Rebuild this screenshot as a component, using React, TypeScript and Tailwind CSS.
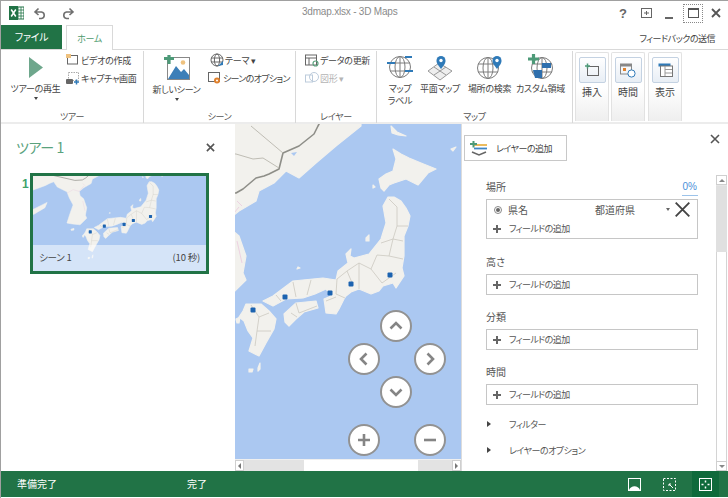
import React from "react";

const LAND = "#f2f1ed";
const SEA = "#abc8f1";
const BORDER = "#cbc9c0";

function Geography({ m = 5 }: { m?: number }) {
  return (
    <g stroke={LAND} strokeWidth="1.2" strokeLinejoin="round">
      <path fill={LAND} d="M60 110 L360 110 L360 125 L335 145 L315 162 L298 177 L285 170 L273 182 L258 190 L255 200 L238 210 L228 218 L230 228 L238 235 L245 255 L242 272 L245 279 L230 294 L212 292 L200 290 L207 268 L214 249 L205 232 L200 219 L178 208 L170 196 L160 200 L150 205 L123 215 L60 215 Z" />
      <path fill={LAND} d="M100 262 L125 258 L155 243 L150 255 L125 270 L100 275Z" />
      <path fill={SEA} stroke="none" d="M290 152 L296 151 L293 155Z" />
      <path fill={LAND} d="M209 304 L216 302 L216 306 L210 307Z" />
      <path fill="none" stroke="#e9c4dc" strokeWidth="0.7" d="M200 222 L214 214 L228 218 L238 206 M236 200 L241 205 M236 240 L241 262" />
      <path fill="none" stroke="#8e8e88" strokeWidth="1.6" d="M60 150 L120 175 L170 182 L205 190 L218 193 L235 192 L242 188 L255 177 L263 175 L268 173 L278 168 L282 152 L298 145 L313 133 L317 125 L325 110" />
      <path fill="none" stroke="#b9b7ae" strokeWidth="0.9" d="M235 153 L252 158 L262 157 L278 167 M100 135 L190 150 L235 153 M250 125 L282 152" />
      {/* Hokkaido */}
      <path fill={LAND} d="M392 148 L400 153 L408 157 L420 162 L435 168 L427 172 L417 184 L405 178 L393 182 L388 184 L383 190 L380 187 L378 178 L385 173 L392 170 L395 158 Z" />
      <path fill={LAND} d="M390 125 L396 131 L405 135 L397 134 L391 132 Z M450 148 L455 146 L452 150Z M372 184 L374 186 L372 187Z" />
      {/* Honshu */}
      <path fill={LAND} d="M387 196 L393 196 L400 200 L405 207 L409 215 L407 225 L403 235 L403 255 L401 267 L403 275 L395 287 L392 282 L382 285 L378 290 L370 293 L358 288 L350 291 L345 295 L343 298 L338 308 L335 313 L325 312 L323 298 L330 295 L325 288 L314 293 L302 297 L285 298 L272 305 L262 300 L272 295 L292 280 L312 278 L322 277 L335 279 L337 270 L347 262 L345 253 L350 248 L349 255 L353 257 L368 253 L380 238 L385 222 L382 205 Z" />
      {/* Shikoku */}
      <path fill={LAND} d="M283 313 L295 302 L315 300 L317 307 L303 311 L295 318 L288 325 L284 321 Z" />
      {/* Kyushu */}
      <path fill={LAND} d="M245 303 L260 303 L268 310 L275 318 L273 328 L265 342 L258 355 L248 350 L252 337 L247 330 L243 320 L238 316 L242 310Z" />
      <path fill={LAND} d="M248 368 L252 368 L251 371 L248 371Z M257 367 L259 362 L259 368 L257 370 Z M235 318 L239 316 L238 322 L236 322Z M365 237 L368 234 L368 240 L365 240Z M297 266 L299 267 L296 268Z" />
      <path fill="none" stroke={BORDER} strokeWidth="0.8" d="M388 198 L396 206 L396 225 L392 238 L380 242 M396 225 L407 225 M392 238 L402 240 M392 238 L388 255 L402 258 M388 255 L376 254 L370 268 L381 282 L395 272 M370 268 L358 262 L346 270 L352 284 M358 262 L358 288 M346 270 L336 278 L335 293 M335 293 L344 297 M310 279 L306 294 M292 281 L295 296 M275 294 L280 300 M335 296 L325 300 M295 302 L298 312 L316 305 M290 312 L296 316 M250 304 L258 316 L268 312 M258 316 L256 330 L270 330 M256 330 L254 345" />
      <g fill="#1c63b0" stroke="none">
        <rect x={249.5} y={306.5} width={m} height={m} rx={1} />
        <rect x={281.5} y={293.5} width={m} height={m} rx={1} />
        <rect x={326.5} y={289.5} width={m} height={m} rx={1} />
        <rect x={347.5} y={280.5} width={m} height={m} rx={1} />
        <rect x={386.5} y={271.5} width={m} height={m} rx={1} />
      </g>
    </g>
  );
}

function Small({ icon, label, muted, tight }: { icon: React.ReactNode; label: string; muted?: boolean; tight?: boolean }) {
  return (
    <div className={`flex items-center gap-[1px] h-[18px] whitespace-nowrap text-[9px] ${tight ? "tracking-[-0.7px]" : "tracking-[-0.3px]"} ${muted ? "text-[#b4b4b4]" : "text-[#444]"}`}>
      <span className="w-[15px] h-[15px] flex items-center justify-center shrink-0">{icon}</span>
      <span>{label}</span>
    </div>
  );
}

function Big({ icon, label, w, caret }: { icon: React.ReactNode; label: React.ReactNode; w: string; caret?: boolean }) {
  return (
    <div className={`${w} flex flex-col items-center shrink-0`}>
      <div className="h-[30px] flex items-center justify-center">{icon}</div>
      <div className="mt-[1px] text-[9px] tracking-[-0.3px] leading-[12px] text-center text-[#444] whitespace-nowrap">{label}</div>
      {caret && <div className="mt-[2px] w-0 h-0 border-x-[2.5px] border-x-transparent border-t-[3px] border-t-[#444]" />}
    </div>
  );
}

function Group({ w, title, children }: { w: string; title: string; children: React.ReactNode }) {
  return (
    <div className={`${w} shrink-0 h-[72px] mt-[1px] flex flex-col border-r border-[#d8d8d8]`}>
      <div className="flex-1 min-h-0 flex pt-[1px]">{children}</div>
      <div className="h-[13px] leading-[13px] text-center text-[9px] tracking-[-0.3px] text-[#555]">{title}</div>
    </div>
  );
}

function Card({ icon, label }: { icon: React.ReactNode; label: string }) {
  return (
    <div className="w-[34px] h-[69px] shrink-0 rounded-t-[2px] border border-[#e2e2e2] border-b-0 bg-gradient-to-b from-white via-white to-[#eeeeee] flex flex-col items-center pt-[4px]">
      <div className="w-[27px] h-[26px] border border-[#c4d2e2] rounded-[2px] bg-gradient-to-b from-white to-[#e8eef5] flex items-center justify-center">{icon}</div>
      <div className="mt-[4px] text-[10px] text-[#444]">{label}</div>
    </div>
  );
}

function Globe({ size = 24 }: { size?: number }) {
  return (
    <svg width={size} height={size} viewBox="0 0 24 24" fill="none" stroke="#7d7d7d" strokeWidth="1">
      <circle cx="12" cy="12" r="10.5" />
      <ellipse cx="12" cy="12" rx="5" ry="10.5" />
      <path d="M2 8h20M2 16h20M12 1.5v21" />
    </svg>
  );
}

function Pin({ x, y }: { x: number; y: number }) {
  return (
    <g transform={`translate(${x} ${y})`}>
      <path d="M0 10 C-4 5 -4.5 3.5 -4.5 1.5 A4.5 4.5 0 0 1 4.5 1.5 C4.5 3.5 4 5 0 10Z" fill="#2f7ab8" />
      <circle cx="0" cy="1.5" r="1.7" fill="#fff" />
    </g>
  );
}

function FieldBox({ children }: { children?: React.ReactNode }) {
  return <div className="w-[212px] border border-[#c6c6c6] bg-white">{children}</div>;
}

function AddField() {
  return (
    <div className="h-[19px] flex items-center pl-[6px] text-[9px] tracking-[-0.6px] text-[#555] whitespace-nowrap">
      <span className="w-[8px] h-[8px] relative mr-[8px] shrink-0">
        <span className="absolute left-0 right-0 top-[3px] h-[2px] bg-[#666]" />
        <span className="absolute top-0 bottom-0 left-[3px] w-[2px] bg-[#666]" />
      </span>
      フィールドの追加
    </div>
  );
}

function Section({ label, h, children, right }: { label: string; h: string; children: React.ReactNode; right?: React.ReactNode }) {
  return (
    <div className={`${h} w-[212px] flex flex-col`}>
      <div className="h-[20px] flex justify-between items-start pt-[2px] text-[10px] leading-[12px] text-[#555]">
        <span>{label}</span>
        {right}
      </div>
      {children}
    </div>
  );
}

function Expander({ label }: { label: string }) {
  return (
    <div className="flex items-center h-[26px] text-[9px] tracking-[-0.5px] text-[#555] whitespace-nowrap">
      <span className="w-0 h-0 border-y-[3.5px] border-y-transparent border-l-[4px] border-l-[#444] ml-[1px] mr-[18px]" />
      {label}
    </div>
  );
}

function MapBtn({ children }: { children: React.ReactNode }) {
  return (
    <div className="w-[32px] h-[32px] rounded-full border-[2px] border-[#929292] bg-white flex items-center justify-center">
      <svg width="16" height="16" viewBox="0 0 16 16" fill="none" stroke="#858585" strokeWidth="2.6">{children}</svg>
    </div>
  );
}

function X({ size = 9, w = 1.6, c = "#555" }: { size?: number; w?: number; c?: string }) {
  return (
    <svg width={size} height={size} viewBox="0 0 10 10" stroke={c} strokeWidth={w} fill="none">
      <path d="M1 1L9 9M9 1L1 9" />
    </svg>
  );
}

function Arrow({ flip }: { flip?: boolean }) {
  return (
    <svg width="14" height="14" viewBox="0 0 14 14" fill="none" stroke="#6f6f6f" strokeWidth="1.6" style={flip ? { transform: "scaleX(-1)" } : undefined}>
      <path d="M5.5 2.5 L2 6 L5.5 9 M2.5 6 H8.5 A3.3 3.3 0 0 1 8.5 12.5 H6" />
    </svg>
  );
}

export default function App() {
  return (
    <div className="w-[728px] h-[498px] overflow-hidden bg-white flex flex-col border-t border-l border-[#a0a0a0] font-['Noto_Sans_CJK_JP','Noto_Sans',sans-serif] [font-feature-settings:'palt'] leading-none">
      {/* Title bar */}
      <div className="h-[24px] shrink-0 flex items-center relative pl-[8px]">
        <svg width="15" height="14" viewBox="0 0 15 14">
          <rect x="5" y="1" width="10" height="12" fill="#fff" stroke="#217346" />
          <path d="M9 1v12M12 1v12M5 4h10M5 7h10M5 10h10" stroke="#217346" strokeWidth="0.8" />
          <rect x="0" y="0" width="9" height="14" fill="#217346" />
          <path d="M2.2 3.5L6.8 10.5M6.8 3.5L2.2 10.5" stroke="#fff" strokeWidth="1.5" />
        </svg>
        <span className="ml-[9px]"><Arrow /></span>
        <span className="ml-[14px]"><Arrow flip /></span>
        <div className="absolute left-[301px] top-[6px] text-[10px] tracking-[-0.2px] text-[#8a8a8a] whitespace-nowrap font-['Liberation_Sans',sans-serif]">3dmap.xlsx - 3D Maps</div>
        <div className="ml-auto flex items-center">
          <span className="w-[23px] pr-[3px] text-center text-[13px] font-bold text-[#666] font-['Liberation_Sans',sans-serif]">?</span>
          <span className="w-[24px] pr-[4px] flex justify-center">
            <svg width="11" height="10" viewBox="0 0 11 10" fill="none" stroke="#666"><rect x="0.5" y="0.5" width="10" height="9" /><path d="M3 5h5M5.5 3v4" /></svg>
          </span>
          <span className="w-[23px] pr-[5px] flex justify-center pt-[9px]"><span className="block w-[8px] h-[2px] bg-[#666]" /></span>
          <span className="w-[20px] h-[19px] border border-dotted border-[#888] flex items-center justify-center">
            <span className="block w-[11px] h-[10px] border border-t-[2px] border-[#555]" />
          </span>
          <span className="w-[25px] flex justify-center"><X size={10} w={1.8} c="#555" /></span>
        </div>
      </div>
      {/* Tab row */}
      <div className="h-[25px] shrink-0 flex items-end border-b border-[#d9d9d9] relative">
        <div className="w-[61px] h-[24px] bg-[#217346] text-white text-[10px] tracking-[-0.3px] flex items-center justify-center">ファイル</div>
        <div className="ml-[4px] w-[47px] h-[25px] -mb-[1px] bg-white border border-b-0 border-[#d9d9d9] text-[#4d9a6e] text-[9px] tracking-[-0.3px] flex items-center justify-center">ホーム</div>
        <div className="ml-auto mr-[13px] mb-[6px] text-[9px] tracking-[-0.5px] text-[#444] whitespace-nowrap">フィードバックの送信</div>
      </div>
      {/* Ribbon */}
      <div className="h-[74px] shrink-0 flex border-b-[2px] border-[#ececec]">
        <Group w="w-[143px]" title="ツアー">
          <Big w="w-[64px] pl-[5px]" caret label="ツアーの再生" icon={
            <svg width="14" height="21" viewBox="0 0 14 21"><path d="M0 0L14 10.5L0 21Z" fill="#6ea78c" /></svg>
          } />
          <div className="-mt-[1px]">
            <Small label="ビデオの作成" icon={
              <svg width="13" height="12" viewBox="0 0 13 12" fill="none"><rect x="1.5" y="1.5" width="10" height="8.5" stroke="#666" /><rect x="0" y="0" width="5" height="4" fill="#efc27f" /></svg>
            } />
            <Small label="キャプチャ画面" icon={
              <svg width="14" height="13" viewBox="0 0 14 13" fill="none"><rect x="2.5" y="0.5" width="10" height="8" stroke="#aaa" strokeDasharray="1.5 1" /><rect x="0" y="7" width="7" height="5" rx="1" fill="#666" /><path d="M8 10h5M10.5 7.5v5" stroke="#2f7ab8" strokeWidth="1.5" /></svg>
            } />
          </div>
        </Group>
        <Group w="w-[152px]" title="シーン">
          <Big w="w-[60px] pl-[5px] pt-[1px]" caret label="新しいシーン" icon={
            <svg width="26" height="26" viewBox="0 0 26 26">
              <rect x="3.5" y="2.5" width="22" height="22" fill="#fff" stroke="#888" />
              <path d="M4 24L12 11L17 17L20 14L25 20V24Z" fill="#3d7fb8" />
              <circle cx="19" cy="7.5" r="2.3" fill="#efc27f" />
              <path d="M0 3.5H10M5 0V9" stroke="#4d9a78" strokeWidth="3.2" />
            </svg>
          } />
          <div className="ml-[3px] -mt-[1px]">
            <div className="ml-[2px]">
              <Small label="テーマ ▾" icon={
                <svg width="14" height="14" viewBox="0 0 14 14" fill="none" stroke="#666"><circle cx="7" cy="7" r="6" /><ellipse cx="7" cy="7" rx="2.6" ry="6" /><path d="M1 5h12M1 9h12" /><path d="M8 13l5-5v4z" fill="#2f7ab8" stroke="none" /></svg>
              } />
            </div>
            <Small tight label="シーンのオプション" icon={
              <svg width="14" height="14" viewBox="0 0 14 14" fill="none"><rect x="0.5" y="1.5" width="11" height="9" stroke="#666" /><circle cx="9" cy="9.5" r="3" fill="#e0812d" /><circle cx="9" cy="9.5" r="1" fill="#fff" /></svg>
            } />
          </div>
        </Group>
        <Group w="w-[81px]" title="レイヤー">
          <div className="ml-[8px] -mt-[1px]">
            <Small label="データの更新" icon={
              <svg width="14" height="13" viewBox="0 0 14 13" fill="none"><rect x="0.5" y="1" width="11" height="10" stroke="#666" /><path d="M0.5 4h11M4 4v7" stroke="#666" /><circle cx="10.5" cy="9.5" r="2.5" stroke="#5aa27d" strokeWidth="1.2" /></svg>
            } />
            <Small muted label="図形 ▾" icon={
              <svg width="14" height="14" viewBox="0 0 14 14" fill="none" stroke="#bccbdb"><rect x="0.5" y="4" width="7" height="7" /><circle cx="9" cy="6" r="4.5" /></svg>
            } />
          </div>
        </Group>
        <Group w="w-[196px]" title="マップ">
          <Big w="w-[41px] pl-[5px]" label={<>マップ<br />ラベル</>} icon={
            <svg width="26" height="26" viewBox="0 0 26 26"><g transform="translate(1 1)"><Globe /></g><path d="M0 9h8M18 3h7M18 17h8" stroke="#2f7ab8" strokeWidth="2.2" /></svg>
          } />
          <Big w="w-[42px] ml-[1px]" label="平面マップ" icon={
            <svg width="26" height="28" viewBox="0 0 26 28" fill="none">
              <path d="M1 18L12 10L25 18L13 27Z" fill="#eee" stroke="#999" />
              <path d="M7 14L19 22M7 22L19 14" stroke="#999" />
              <Pin x={14} y={6} />
            </svg>
          } />
          <Big w="w-[49px] ml-[4px]" label="場所の検索" icon={
            <svg width="28" height="26" viewBox="0 0 28 26"><g transform="translate(0 2)"><Globe /></g><Pin x={21} y={5} /></svg>
          } />
          <Big w="w-[51px] ml-[1px]" label="カスタム領域" icon={
            <svg width="26" height="26" viewBox="0 0 26 26">
              <g transform="translate(2 2)"><Globe /></g>
              <path d="M5 16h9v8H7zM14 9h9v5h-9z" fill="#2f6fad" />
              <path d="M0 5H11M5.5 0V10" stroke="#4d9a78" strokeWidth="3.2" />
            </svg>
          } />
        </Group>
        <div className="flex gap-[2px] ml-[2px] mt-[2px] items-start">
          <Card label="挿入" icon={
            <svg width="14" height="14" viewBox="0 0 14 14" fill="none"><rect x="2.5" y="3.5" width="11" height="9" stroke="#666" /><path d="M0 3h5M2.5 0.5v5" stroke="#4d9a78" strokeWidth="1.5" /></svg>
          } />
          <Card label="時間" icon={
            <svg width="16" height="15" viewBox="0 0 16 15" fill="none"><rect x="0.5" y="1" width="11" height="10" stroke="#888" /><rect x="0.5" y="1" width="11" height="2.5" fill="#888" /><rect x="3" y="5" width="3" height="3" fill="#e0812d" /><circle cx="11.5" cy="10.5" r="3.6" fill="#fff" stroke="#2f7ab8" /></svg>
          } />
          <div className="ml-[1px]">
            <Card label="表示" icon={
              <svg width="15" height="14" viewBox="0 0 15 14" fill="none"><rect x="0.5" y="0.5" width="12" height="3" fill="#2f7ab8" /><rect x="2.5" y="3" width="12" height="10.5" fill="#fff" stroke="#777" /><path d="M7 3v10M7 6.5h7M7 10h7" stroke="#999" /></svg>
            } />
          </div>
        </div>
      </div>
      {/* Main */}
      <div className="flex-1 min-h-0 flex">
        {/* Left panel */}
        <div className="w-[234px] shrink-0 bg-white relative">
          <div className="flex justify-between items-center pl-[15px] pr-[20px] pt-[16px]">
            <span className="text-[14px] tracking-[-0.4px] text-[#5aa27d] whitespace-nowrap">ツアー 1</span>
            <X size={9} w={1.8} c="#555" />
          </div>
          <div className="flex mt-[19px] pl-[21px]">
            <span className="w-[8px] text-[12px] font-bold text-[#3fa36b] font-['Liberation_Sans',sans-serif] pt-[5px]">1</span>
            <div className="w-[179px] h-[101px] border-[3px] border-[#217346] relative overflow-hidden" style={{ background: SEA }}>
              <svg className="absolute inset-0 blur-[0.3px]" width="173" height="95" viewBox="123 183 393 216">
                <Geography m={7} />
              </svg>
              <div className="absolute left-0 right-0 bottom-0 h-[26px] bg-white/50 flex items-center justify-between px-[6px] text-[9.5px] tracking-[-0.2px] text-[#444]">
                <span>シーン 1</span>
                <span>(10 秒)</span>
              </div>
            </div>
          </div>
        </div>
        {/* Map */}
        <div className="w-[226px] shrink-0 flex flex-col relative">
          <div className="flex-1 min-h-0 relative overflow-hidden" style={{ background: SEA }}>
            <svg className="absolute inset-0 blur-[0.3px]" width="226" height="336" viewBox="234 123 226 336">
              <Geography />
            </svg>
            <div className="absolute left-[113px] top-[186px] grid grid-cols-[32px_34px_32px] grid-rows-[32px_1px_32px_1px_32px] gap-0">
              <div className="col-start-2 row-start-1"><MapBtn><path d="M2.5 10.5L8 5L13.5 10.5" /></MapBtn></div>
              <div className="col-start-1 row-start-3"><MapBtn><path d="M10.5 2.5L5 8L10.5 13.5" /></MapBtn></div>
              <div className="col-start-3 row-start-3"><MapBtn><path d="M5.5 2.5L11 8L5.5 13.5" /></MapBtn></div>
              <div className="col-start-2 row-start-5"><MapBtn><path d="M2.5 5.5L8 11L13.5 5.5" /></MapBtn></div>
            </div>
            <div className="absolute left-[113px] top-[300px] w-[98px] flex justify-between">
              <MapBtn><path d="M2 8H14M8 2V14" /></MapBtn>
              <MapBtn><path d="M2 8H14" /></MapBtn>
            </div>
          </div>
          <div className="h-[12px] shrink-0 bg-[#e3e3e3] flex items-stretch border-t border-[#efefef]">
            <div className="w-[9px] bg-white border border-[#cfcfcf] flex items-center justify-center">
              <span className="w-0 h-0 border-y-[3px] border-y-transparent border-r-[3px] border-r-[#777]" />
            </div>
            <div className="w-[58px] ml-[2px]" />
            <div className="w-[114px] bg-white" />
            <div className="flex-1" />
            <div className="w-[9px] bg-white border border-[#cfcfcf] flex items-center justify-center">
              <span className="w-0 h-0 border-y-[3px] border-y-transparent border-l-[3px] border-l-[#777]" />
            </div>
          </div>
        </div>
        {/* Right panel */}
        <div className="flex-1 min-w-0 relative flex bg-white border-l border-[#dcdcdc]">
          <div className="absolute right-[8px] top-[10px]"><X size={10} w={1.6} c="#555" /></div>
          <div className="flex-1 min-w-0 flex flex-col">
            <div className="pl-[2px] pt-[11px]">
              <div className="w-[103px] h-[26px] border border-[#c8c8c8] flex items-center pl-[5px] gap-[9px] text-[9px] tracking-[-0.5px] text-[#444] whitespace-nowrap">
                <svg width="17" height="15" viewBox="0 0 17 15">
                  <path d="M4 4h13" stroke="#e9b44c" strokeWidth="1.8" />
                  <path d="M4 7.5h13" stroke="#3f86c6" strokeWidth="1.8" />
                  <path d="M2 11 L9 14 L16 11" stroke="#666" strokeWidth="1.6" fill="none" />
                  <path d="M0 3h7M3.5 0V6.5" stroke="#4d9a78" strokeWidth="2" />
                </svg>
                レイヤーの追加
              </div>
            </div>
            <div className="pl-[24px] pt-[18px]">
              <Section h="h-[75px]" label="場所" right={<span className="text-[10px] text-[#4a90d9] border-b border-[#9cc3ea] pb-[2px] px-[1px] font-['Liberation_Sans',sans-serif]">0%</span>}>
                <FieldBox>
                  <div className="h-[19px] flex items-center pl-[7px] pr-[5px] text-[10px] text-[#555] whitespace-nowrap">
                    <span className="w-[8px] h-[8px] rounded-full border border-[#888] flex items-center justify-center mr-[6px]"><span className="w-[4px] h-[4px] rounded-full bg-[#666]" /></span>
                    <span className="w-[87px]">県名</span>
                    <span className="w-[71px]">都道府県</span>
                    <span className="w-0 h-0 border-x-[2.5px] border-x-transparent border-t-[3px] border-t-[#666] mr-[4px]" />
                    <X size={17} w={1.1} c="#444" />
                  </div>
                  <AddField />
                </FieldBox>
              </Section>
              <Section h="h-[55px]" label="高さ"><FieldBox><AddField /></FieldBox></Section>
              <Section h="h-[55px]" label="分類"><FieldBox><AddField /></FieldBox></Section>
              <Section h="h-[47px]" label="時間"><FieldBox><AddField /></FieldBox></Section>
              <Expander label="フィルター" />
              <Expander label="レイヤーのオプション" />
            </div>
          </div>
          <div className="w-[11px] mr-[1px] mt-[51px] shrink-0 bg-[#e6e6e6] flex flex-col">
            <div className="h-[10px] bg-white border border-[#cfcfcf] flex items-center justify-center">
              <span className="w-0 h-0 border-x-[3px] border-x-transparent border-b-[3px] border-b-[#888]" />
            </div>
            <div className="h-[66px] mt-[1px] bg-[#e0e0e0]" />
            <div className="flex-1 bg-white border-x border-[#d4d4d4]" />
            <div className="h-[10px] bg-white border border-[#cfcfcf] flex items-center justify-center">
              <span className="w-0 h-0 border-x-[3px] border-x-transparent border-t-[3px] border-t-[#888]" />
            </div>
          </div>
        </div>
      </div>
      {/* Status */}
      <div className="h-[26px] shrink-0 bg-[#217346] text-white text-[10px] flex items-center mb-[1px]">
        <span className="ml-[16px] w-[170px]">準備完了</span>
        <span>完了</span>
        <div className="ml-auto flex items-center h-full">
          <svg width="13" height="13" viewBox="0 0 13 13" fill="none" className="mr-[22px]"><rect x="0.5" y="0.5" width="12" height="12" stroke="#fff" /><path d="M1 12 C3 7 10 7 12 12Z" fill="#fff" /></svg>
          <svg width="13" height="13" viewBox="0 0 13 13" fill="none" className="mr-[16px]"><rect x="0.5" y="0.5" width="12" height="12" stroke="#fff" strokeDasharray="2 1.5" /><path d="M6 6l4 4M6 6h2M6 6v2" stroke="#fff" /></svg>
          <div className="w-[27px] h-full bg-[#0f6a3b] flex items-center justify-center mr-[9px]">
            <svg width="13" height="13" viewBox="0 0 13 13" fill="none"><rect x="0.5" y="0.5" width="12" height="12" stroke="#fff" /><path d="M6.5 2.5v2M6.5 8.5v2M2.5 6.5h2M8.5 6.5h2" stroke="#fff" strokeWidth="1.5" /></svg>
          </div>
        </div>
      </div>
    </div>
  );
}
